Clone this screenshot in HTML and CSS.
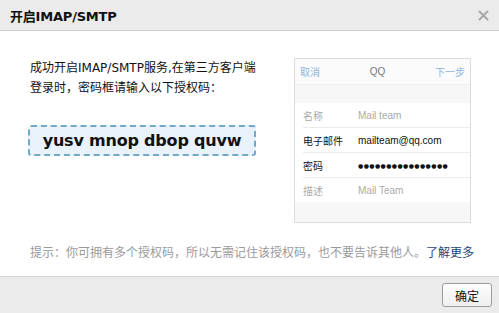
FILE: index.html
```html
<!DOCTYPE html>
<html lang="zh-CN">

<head>
    <meta charset="UTF-8">
    <title>开启IMAP/SMTP</title>
    <link rel="stylesheet" href="styles.css">
</head>

<body>
    <div class="dialog">
        <div class="dialog-head">
            <span class="dialog-title">开启IMAP/SMTP</span>
            <span class="close-btn">
                <svg width="11" height="11" viewBox="0 0 11 11">
                    <path d="M1 1L10 10M10 1L1 10" stroke="#a8a8a8" stroke-width="2" fill="none" />
                </svg>
            </span>
        </div>

        <div class="dialog-body">
            <div class="main-row">
                <div class="info">
                    <p class="info-text">成功开启IMAP/SMTP服务,在第三方客户端<br>登录时，密码框请输入以下授权码：</p>
                    <div class="auth-code">yusv mnop dbop quvw</div>
                </div>

                <!-- phone settings preview -->
                <div class="phone">
                    <div class="phone-nav">
                        <span class="nav-link">取消</span>
                        <span class="nav-title">QQ</span>
                        <span class="nav-link">下一步</span>
                    </div>
                    <div class="phone-gap"></div>
                    <ul class="phone-list">
                        <li class="phone-row muted"><span class="row-label">名称</span><span>Mail team</span></li>
                        <li class="phone-row"><span class="row-label">电子邮件</span><span>mailteam@qq.com</span></li>
                        <li class="phone-row"><span class="row-label">密码</span><span class="dots">●●●●●●●●●●●●●●●●</span></li>
                        <li class="phone-row muted"><span class="row-label">描述</span><span>Mail Team</span></li>
                    </ul>
                    <div class="phone-gap bottom"></div>
                </div>
            </div>

            <p class="hint">提示：你可拥有多个授权码，所以无需记住该授权码，也不要告诉其他人。<a href="#" class="more-link">了解更多</a></p>
        </div>

        <div class="dialog-foot">
            <button class="ok-btn">确定</button>
        </div>
    </div>
</body>

</html>
```

FILE: styles.css
```css
body {
    margin: 0;
    font-family: "DejaVu Sans", "Noto Sans CJK SC", sans-serif;
    font-size: 12px;
    color: #222;
    background: #fff;
}

.dialog {
    width: 499px;
    height: 313px;
    display: flex;
    flex-direction: column;
}

.dialog-head {
    height: 30px;
    background-color: #ebebeb;
    border-bottom: 1px solid #cfcfcf;
    display: flex;
    align-items: center;
    justify-content: space-between;
    padding: 0 10px;
}

.dialog-title {
    font-size: 13px;
    font-weight: 700;
    color: #111;
    letter-spacing: -0.2px;
}

.close-btn {
    display: flex;
}

.dialog-body {
    flex: 1;
    padding: 27px 0 0 30px;
    border-bottom: 1px solid #d0d0d0;
}

.main-row {
    display: flex;
    justify-content: space-between;
    padding-right: 28px;
}

.info-text {
    margin: 0;
    line-height: 20px;
    color: #111;
}

.auth-code {
    margin: 27px 0 0 -2px;
    width: 224px;
    height: 27px;
    line-height: 27px;
    text-align: center;
    border: 2px dashed #72a9c8;
    border-radius: 3px;
    background-color: #e9f2fa;
    font-size: 16px;
    font-weight: 700;
    color: #111;
    letter-spacing: -0.2px;
}

.phone {
    width: 175px;
    border: 1px solid #dcdcdc;
    background-color: #f7f7f8;
    font-family: "Liberation Sans", "Noto Sans CJK SC", sans-serif;
    font-size: 10px;
}

.phone-nav {
    height: 25px;
    display: flex;
    align-items: center;
    justify-content: space-between;
    padding: 0 5px;
    background-color: #fbfbfb;
    border-bottom: 1px solid #eeeeee;
}

.nav-link {
    color: #8db6e2;
}

.nav-title {
    color: #777;
}

.phone-gap {
    height: 18px;
}

.phone-gap.bottom {
    height: 20px;
}

.phone-list {
    list-style: none;
    margin: 0;
    padding: 0 0 0 8px;
    background-color: #fff;
}

.phone-row {
    height: 24px;
    display: flex;
    align-items: center;
    border-bottom: 1px solid #ebebeb;
    color: #111;
    white-space: nowrap;
}

.phone-row:last-child {
    border-bottom: none;
}

.phone-row.muted {
    color: #aaa;
}

.row-label {
    width: 55px;
    flex-shrink: 0;
}

.dots {
    font-family: "DejaVu Sans", sans-serif;
    font-size: 6px;
    letter-spacing: 0.4px;
}

.hint {
    margin: 19px 0 0;
    line-height: 20px;
    color: #9a9a9a;
    font-family: "Noto Sans CJK SC", sans-serif;
}

.more-link {
    color: #1f4474;
    text-decoration: none;
}

.dialog-foot {
    height: 36px;
    background-color: #ebebeb;
    display: flex;
    align-items: center;
    justify-content: flex-end;
    padding-right: 7px;
}

.ok-btn {
    width: 50px;
    height: 24px;
    border: 1px solid #9c9c9c;
    border-radius: 3px;
    background: linear-gradient(#fdfdfd, #efefef);
    font-family: "Noto Sans CJK SC", sans-serif;
    font-size: 12px;
    color: #111;
    padding: 0;
}
```
